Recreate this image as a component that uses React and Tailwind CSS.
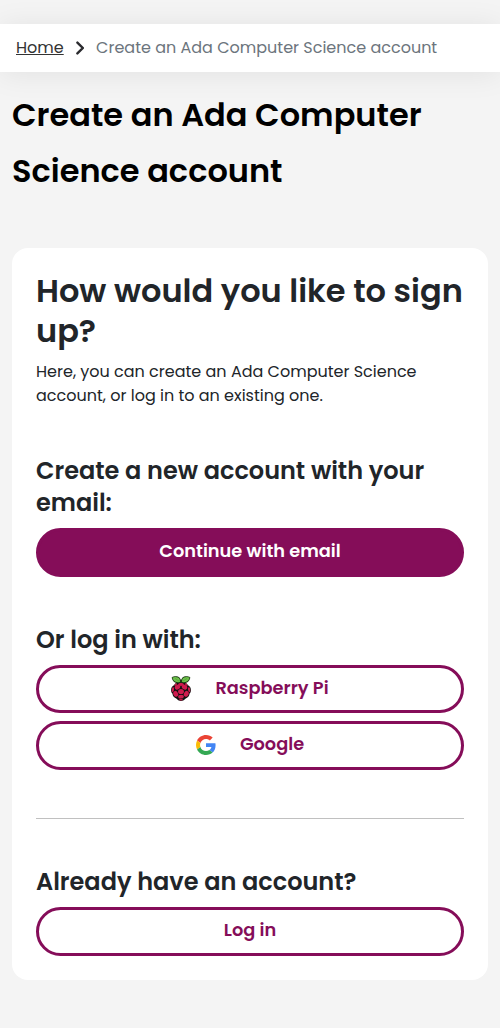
function Chevron() {
  return (
    <svg width="8" height="14" viewBox="0 0 8 14" fill="none" stroke="#2b2b2f" strokeWidth="2.4" strokeLinecap="round" aria-hidden="true">
      <path d="M1.400 1.600 6.800 7 1.400 12.400" />
    </svg>
  );
}

function RaspberryIcon() {
  return (
    <svg className="mt-px" width="20" height="25" viewBox="0 0 20 25" aria-hidden="true">
      <path d="M10 6C13 5.600 15.800 6.700 16.800 9c2 .9 3.200 3 3.100 5.200 0 1.600-.5 2.600-1.300 3.400-.2 2.400-1.800 4.400-4.200 5.100C13.100 24 11.500 25 10 25s-3.100-1-4.400-2.300c-2.400-.7-4-2.700-4.200-5.100C.6 16.800.1 15.800.1 14.200 0 12 1.200 9.900 3.200 9 4.200 6.700 7 5.600 10 6Z" fill="#101010" />
      <path d="M9.700 6.800C6 7.800 2.200 6.400 1.300 3.400.9 2.600.5 1.900.9 1.200 2.600.1 7.500-.6 9 2.200L10 4l1-1.800c1.500-2.800 6.400-2.100 8.100-1 .4.700 0 1.400-.4 2.200-.9 3-4.700 4.400-8.400 3.400Z" fill="#1c3a14" />
      <path d="M9 6C6 6.600 2.800 5.400 1.900 2.900L1.300 1.500C4 .4 7.800.7 8.800 3.400ZM11 6c3 .6 6.200-.6 7.100-3.100l.6-1.400C16 .4 12.200.7 11.200 3.400Z" fill="#6cc04a" />
      <path d="m4 2.500 4.400 2.800M16 2.500l-4.400 2.800" stroke="#3c8a2b" strokeWidth=".4" />
      <g fill="#cf1b4e">
        <path d="M10 6.900c1.600 0 2.900.6 2.900 1.300S11.600 10 10 10 7.100 8.900 7.100 8.200 8.400 6.900 10 6.900Z" />
        <ellipse cx="6.500" cy="11.200" rx="2.900" ry="2.300" transform="rotate(-35 6.500 11.200)" />
        <ellipse cx="13.500" cy="11.200" rx="2.900" ry="2.300" transform="rotate(35 13.500 11.200)" />
        <ellipse cx="10" cy="15.500" rx="2.900" ry="2.600" />
        <ellipse cx="4.700" cy="17.800" rx="2.300" ry="3" transform="rotate(-28 4.700 17.800)" />
        <ellipse cx="15.300" cy="17.800" rx="2.300" ry="3" transform="rotate(28 15.300 17.800)" />
        <ellipse cx="1.900" cy="13.600" rx="1.100" ry="2.500" transform="rotate(10 1.900 13.600)" />
        <ellipse cx="18.100" cy="13.600" rx="1.100" ry="2.500" transform="rotate(-10 18.100 13.600)" />
        <ellipse cx="10" cy="20.700" rx="2.800" ry="1.900" />
        <ellipse cx="10" cy="23.700" rx="1.900" ry=".7" />
        <ellipse cx="4.700" cy="8.600" rx="1.700" ry=".8" transform="rotate(-35 4.700 8.600)" />
        <ellipse cx="15.300" cy="8.600" rx="1.700" ry=".8" transform="rotate(35 15.300 8.600)" />
      </g>
    </svg>
  );
}

function GoogleIcon() {
  return (
    <svg width="20" height="20" viewBox="0 0 48 48" aria-hidden="true">
      <path fill="#EA4335" d="M24 9.500c3.540 0 6.710 1.220 9.210 3.600l6.850-6.850C35.900 2.380 30.470 0 24 0 14.620 0 6.510 5.380 2.560 13.220l7.980 6.190C12.430 13.720 17.740 9.500 24 9.500z" />
      <path fill="#4285F4" d="M46.980 24.550c0-1.570-.15-3.090-.38-4.550H24v9.020h12.940c-.58 2.960-2.260 5.480-4.780 7.180l7.730 6c4.510-4.180 7.090-10.360 7.090-17.650z" />
      <path fill="#FBBC05" d="M10.530 28.590c-.48-1.450-.76-2.990-.76-4.590s.27-3.140.76-4.590l-7.980-6.190C.92 16.460 0 20.120 0 24c0 3.880.92 7.540 2.560 10.780l7.970-6.190z" />
      <path fill="#34A853" d="M24 48c6.480 0 11.930-2.130 15.890-5.810l-7.730-6c-2.150 1.450-4.920 2.300-8.160 2.300-6.260 0-11.570-4.220-13.470-9.910l-7.980 6.190C6.510 42.620 14.620 48 24 48z" />
    </svg>
  );
}

function Button({ filled, icon, children }) {
  return (
    <button
      type="button"
      className={`flex w-full items-center justify-center gap-6 rounded-full border-3 border-[#850d59] px-6 pt-[7px] pb-[9px] text-[17.76px] leading-[26.64px] font-semibold ${
        filled ? "bg-[#850d59] text-white" : "bg-white text-[#850d59]"
      }`}
    >
      {icon}
      <span>{children}</span>
    </button>
  );
}

function Heading({ children }) {
  return <h3 className="-mt-px mb-[9px] text-2xl leading-8 font-semibold">{children}</h3>;
}

export default function App() {
  return (
    <div className="min-h-screen overflow-hidden bg-[#f4f4f4] pt-6 font-['Poppins',sans-serif] text-base text-[#212529]">
      <nav className="flex h-12 items-center bg-white px-4 shadow-[0_2px_30px_rgba(0,0,0,0.08)]">
        <a href="#home" className="text-[#333] underline">Home</a>
        <span className="mr-3 ml-[12.4px]"><Chevron /></span>
        <span className="text-[#6c757d]">Create an Ada Computer Science account</span>
      </nav>
      <main className="px-3">
        <h1 className="pt-[15px] pb-px text-[32px] leading-14 font-semibold text-black">
          Create an Ada Computer Science account
        </h1>
        <section className="mt-12 rounded-2xl bg-white p-6">
          <h2 className="-mt-px mb-[9px] text-[32px] leading-10 font-semibold">How would you like to sign up?</h2>
          <p className="mb-12">Here, you can create an Ada Computer Science account, or log in to an existing one.</p>
          <div>
            <Heading>Create a new account with your email:</Heading>
            <Button filled>Continue with email</Button>
          </div>
          <div className="mt-12 flex flex-col">
            <Heading>Or log in with:</Heading>
            <div className="flex flex-col gap-2">
              <Button icon={<RaspberryIcon />}>Raspberry Pi</Button>
              <Button icon={<GoogleIcon />}>Google</Button>
            </div>
          </div>
          <hr className="my-12 border-[#c0c0c0]" />
          <Heading>Already have an account?</Heading>
          <Button>Log in</Button>
        </section>
      </main>
    </div>
  );
}
